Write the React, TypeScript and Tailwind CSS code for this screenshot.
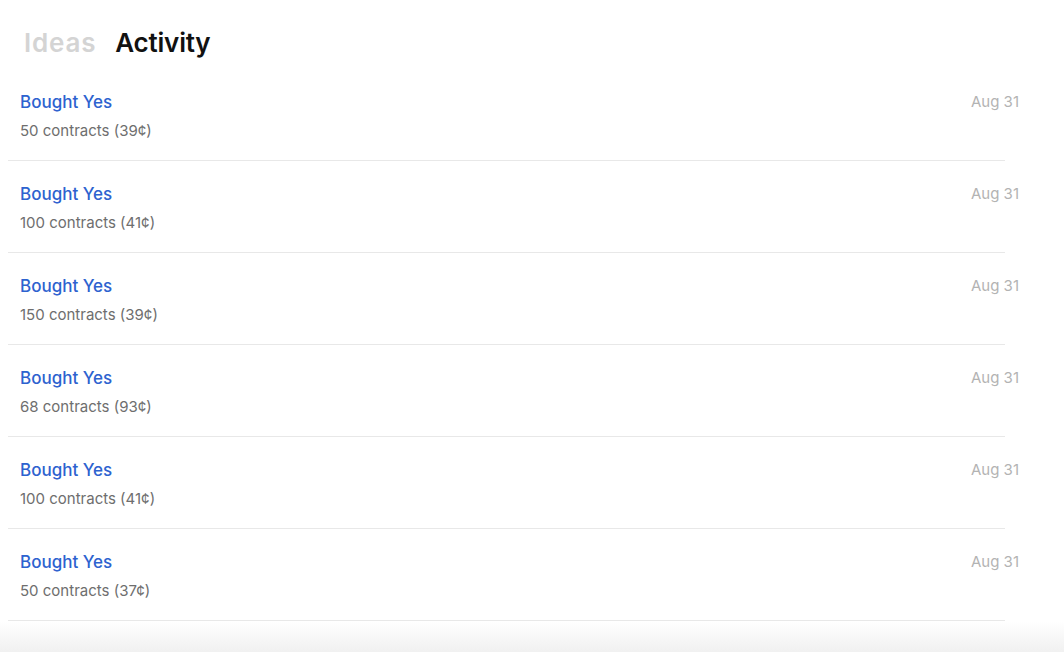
import React from 'react'

interface Trade {
  label: string
  detail: string
  date: string
}

const trades: Trade[] = [
  { label: 'Bought Yes', detail: '50 contracts (39¢)', date: 'Aug 31' },
  { label: 'Bought Yes', detail: '100 contracts (41¢)', date: 'Aug 31' },
  { label: 'Bought Yes', detail: '150 contracts (39¢)', date: 'Aug 31' },
  { label: 'Bought Yes', detail: '68 contracts (93¢)', date: 'Aug 31' },
  { label: 'Bought Yes', detail: '100 contracts (41¢)', date: 'Aug 31' },
  { label: 'Bought Yes', detail: '50 contracts (37¢)', date: 'Aug 31' },
]

const App: React.FC = () => {
  return (
    <div className="h-[652px] w-[1064px] overflow-hidden bg-white font-['Inter',sans-serif]">
      <div className="flex items-center gap-[19px] pl-6 pt-[23px] h-[69px] pb-[7px]">
        <span className="text-[26px] font-semibold tracking-[0.8px] text-[#d4d4d4]">Ideas</span>
        <span className="text-[26px] font-semibold tracking-[-0.2px] text-[#111]">Activity</span>
      </div>
      <div>
        {trades.map((t, i) => (
          <div key={i} className="ml-2 w-[997px] h-[92px] border-b border-[#e8e8e8]">
            <div className="-mr-[14px] flex justify-between pl-3 pt-[21px]">
              <div className="flex flex-col gap-[7px]">
                <span className="text-[17px] leading-6 font-medium text-[#2d62cf]">{t.label}</span>
                <span className="text-[15px] leading-5 text-[#6e6e6e]">{t.detail}</span>
              </div>
              <span className="text-[15px] leading-6 text-[#b3b3b3]">{t.date}</span>
            </div>
          </div>
        ))}
      </div>
      <div className="h-8 bg-gradient-to-b from-white to-[#f0f0f0]" />
    </div>
  )
}

export default App
